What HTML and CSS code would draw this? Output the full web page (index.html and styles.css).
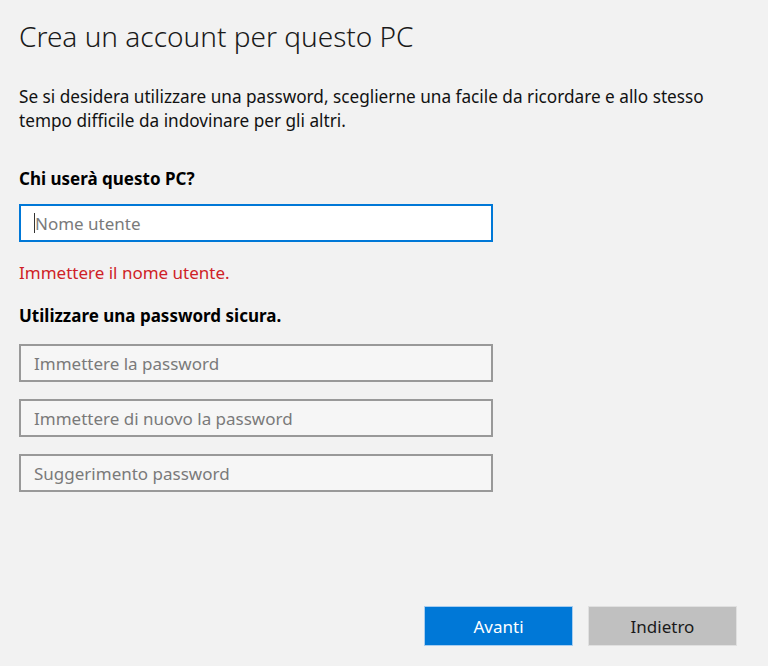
FILE: index.html
```html
<!DOCTYPE html>
<html lang="it">
<head>
<meta charset="utf-8">
<title>Crea un account per questo PC</title>
<link rel="stylesheet" href="styles.css">
</head>
<body>
<main class="page">
  <h1 class="title">Crea un account per questo PC</h1>
  <p class="intro">Se si desidera utilizzare una password, sceglierne una facile da ricordare e allo stesso tempo difficile da indovinare per gli altri.</p>
  <h2 class="label">Chi userà questo PC?</h2>
  <div class="field field-focus"><span class="caret"></span><span class="ph">Nome utente</span></div>
  <p class="error">Immettere il nome utente.</p>
  <h2 class="label label-pw">Utilizzare una password sicura.</h2>
  <div class="field"><span class="ph">Immettere la password</span></div>
  <div class="field"><span class="ph">Immettere di nuovo la password</span></div>
  <div class="field"><span class="ph">Suggerimento password</span></div>
  <div class="spacer"></div>
  <div class="actions">
    <button class="btn btn-primary">Avanti</button>
    <button class="btn btn-secondary">Indietro</button>
  </div>
</main>
</body>
</html>
```
FILE: styles.css
```css
html, body {
  margin: 0;
  padding: 0;
  background: #f2f2f2;
  height: 100%;
}
body {
  font-family: "Noto Sans", "Open Sans", sans-serif;
  color: #000;
}
.page {
  box-sizing: border-box;
  height: 666px;
  display: flex;
  flex-direction: column;
  padding: 17px 31px 20px 19px;
}
.title {
  margin: 0;
  font-size: 28px;
  font-weight: 300;
  line-height: 38px;
  color: #1a1a1a;
}
.intro {
  margin: 30px 0 0;
  width: 720px;
  font-size: 17.2px;
  line-height: 24px;
  color: #111;
}
.label {
  margin: 35px 0 0;
  font-size: 17px;
  font-weight: 700;
  line-height: 22px;
}
.label-pw {
  margin-top: 21px;
}
.field {
  box-sizing: border-box;
  width: 474px;
  height: 38px;
  border: 2px solid #999;
  background: #f6f6f6;
  display: flex;
  align-items: center;
  padding-left: 13px;
  margin-top: 17px;
  font-size: 17px;
}
.field-focus {
  margin-top: 14px;
  border-color: #0078d7;
  background: #fff;
}
.caret {
  width: 1px;
  height: 20px;
  background: #333;
}
.ph { color: #7a7a7a; }
.error {
  margin: 20px 0 0;
  font-size: 17px;
  line-height: 22px;
  color: #cf1f27;
}
.spacer { flex: 1; }
.actions {
  display: flex;
  justify-content: flex-end;
  gap: 15px;
}
.btn {
  box-sizing: border-box;
  width: 149px;
  height: 40px;
  font-family: inherit;
  font-size: 17px;
  border: 1px solid transparent;
  padding: 0;
}
.btn-primary {
  background: #0078d7;
  border-color: #a8cdef;
  color: #fff;
}
.btn-secondary {
  background: #c0c0c0;
  border-color: #e0e0e0;
  color: #1a1a1a;
}
```
